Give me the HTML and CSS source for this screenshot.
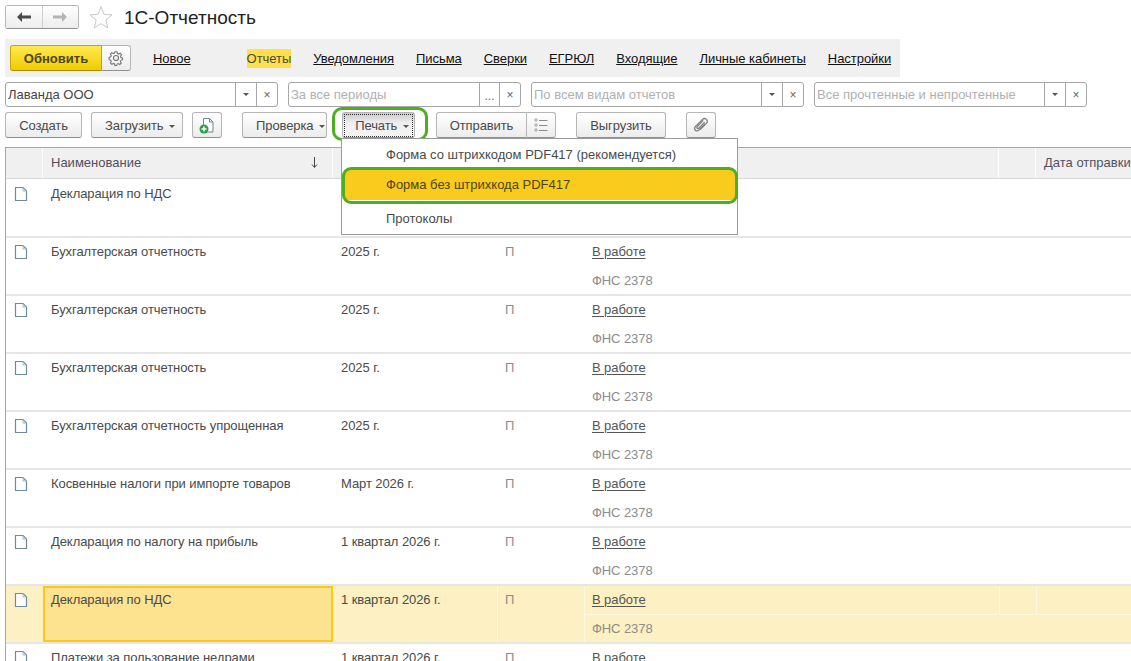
FILE: index.html
```html
<!DOCTYPE html>
<html lang="ru">
<head>
    <meta charset="UTF-8">
    <meta name="viewport" content="width=device-width, initial-scale=1.0">
    <title>1С-Отчетность</title>
    <link rel="stylesheet" href="styles.css">
</head>
<body>
    <svg class="sprites" width="0" height="0">
        <symbol id="doc" viewBox="0 0 14 16">
            <path d="M1.500 1.500h7.500l3.500 3.500v9.500h-11z" fill="#fff" stroke="#6f8a9b" stroke-width="1.200"/>
            <path d="M9 1.500v3.500h3.500" fill="none" stroke="#a9bac5"/>
        </symbol>
    </svg>

    <header class="title-bar">
        <div class="nav-group">
            <button class="nav-btn">
                <svg width="16" height="12" viewBox="0 0 16 12"><path d="M1 6l5-5v3.500h9v3H6V11z" fill="#4a4a4a"/></svg>
            </button>
            <button class="nav-btn">
                <svg width="16" height="12" viewBox="0 0 16 12"><path d="M15 6l-5-5v3.500H1v3h9V11z" fill="#b4b4b4"/></svg>
            </button>
        </div>
        <svg class="star" width="24" height="24" viewBox="0 0 24 24"><path d="M12 1.500l3 7.800 8 .6-6.200 5.100 2 8L12 18.600 5.200 23l2-8L1 9.900l8-.6z" fill="none" stroke="#c8c8c8"/></svg>
        <h1>1С-Отчетность</h1>
    </header>

    <nav class="top-panel">
        <div class="refresh-group">
            <button class="refresh-btn">Обновить</button>
            <button class="gear-btn">
                <svg width="16" height="16" viewBox="0 0 16 16" fill="none" stroke="#777" stroke-width="1.200"><path d="M6.800 1.500h2.400l.4 1.900 1.300.6 1.700-1 1.500 1.800-1.100 1.500.4 1.400 1.800.7v1.700l-1.800.7-.6 1.400.9 1.600-1.600 1.500-1.600-1-1.300.6-.4 1.500H6.800l-.4-1.700-1.300-.5-1.600 1-1.600-1.600 1-1.600-.6-1.300-1.800-.6V7.600l1.800-.6.6-1.400-1-1.600 1.600-1.600 1.600 1 1.300-.6z" transform="translate(.6 .4) scale(.92)"/><circle cx="8" cy="8" r="2.500"/></svg>
            </button>
        </div>
        <a class="tab tab-new" href="#">Новое</a>
        <span class="tab tab-active">Отчеты</span>
        <a class="tab" href="#">Уведомления</a>
        <a class="tab" href="#">Письма</a>
        <a class="tab" href="#">Сверки</a>
        <a class="tab" href="#">ЕГРЮЛ</a>
        <a class="tab" href="#">Входящие</a>
        <a class="tab" href="#">Личные кабинеты</a>
        <a class="tab" href="#">Настройки</a>
    </nav>

    <div class="filters">
        <div class="field field-wide">
            <span class="field-text filled">Лаванда ООО</span>
            <span class="field-btn"><i class="caret"></i></span>
            <span class="field-btn">×</span>
        </div>
        <div class="field">
            <span class="field-text">За все периоды</span>
            <span class="field-btn dots">...</span>
            <span class="field-btn">×</span>
        </div>
        <div class="field field-wide">
            <span class="field-text">По всем видам отчетов</span>
            <span class="field-btn"><i class="caret"></i></span>
            <span class="field-btn">×</span>
        </div>
        <div class="field field-wide">
            <span class="field-text">Все прочтенные и непрочтенные</span>
            <span class="field-btn"><i class="caret"></i></span>
            <span class="field-btn">×</span>
        </div>
    </div>

    <div class="toolbar">
        <button class="btn btn-create">Создать</button>
        <button class="btn btn-load">Загрузить <i class="caret"></i></button>
        <button class="btn btn-icon btn-add">
            <svg width="16" height="17" viewBox="0 0 16 17"><path d="M4.500 1.500h6l3.500 3.500v10h-9.500z" fill="#fff" stroke="#6d8796"/><path d="M10.500 1.500v3.500H14" fill="none" stroke="#6d8796"/><circle cx="5" cy="12" r="4.500" fill="#2f9e44"/><path d="M5 9.500v5M2.500 12h5" stroke="#fff" stroke-width="1.500"/></svg>
        </button>
        <button class="btn btn-check">Проверка <i class="caret"></i></button>
        <div class="print-wrap">
            <button class="btn btn-print"><span class="print-inner">Печать <i class="caret"></i></span></button>
        </div>
        <div class="send-group">
            <button class="btn btn-send">Отправить</button>
            <button class="btn btn-icon btn-list">
                <svg width="14" height="14" viewBox="0 0 14 14" fill="none" stroke="#8a8a8a"><circle cx="2" cy="2" r="1.200" stroke="#a0a0a0"/><circle cx="2" cy="7" r="1.200" stroke="#a0a0a0"/><circle cx="2" cy="12" r="1.200" stroke="#a0a0a0"/><path d="M5 2.500h8.500M5 7.500h8.500M5 12.500h8.500"/></svg>
            </button>
        </div>
        <button class="btn btn-unload">Выгрузить</button>
        <button class="btn btn-icon btn-clip">
            <svg width="16" height="16" viewBox="0 0 16 16" fill="none" stroke="#808080" stroke-width="1.300"><path d="M13.500 2.500c-1.300-1.300-3-1.100-4.200.1L3 8.900c-1.800 1.800-1.700 3.300-.7 4.300s2.500 1 4.200-.7l5.600-5.600"/><path d="M13.500 2.500c1 1.300.9 2.900-.1 3.900l-6.200 6.200M10.300 3.400l-5.600 5.600c-1 1-1 1.700-.5 2.200s1.200.4 2.100-.5l5.400-5.400"/></svg>
        </button>
    </div>

    <div class="print-menu">
        <div class="menu-item">Форма со штрихкодом PDF417 (рекомендуется)</div>
        <div class="menu-item menu-selected">Форма без штрихкода PDF417</div>
        <div class="menu-item menu-last">Протоколы</div>
    </div>

    <main class="table">
        <div class="table-head">
            <div class="head-cell"></div>
            <div class="head-cell head-name">Наименование
                <svg class="sort-arrow" width="7" height="11" viewBox="0 0 7 11"><path d="M3.500 0v10M1 7.500l2.500 3 2.500-3" fill="none" stroke="#444"/></svg>
            </div>
            <div class="head-cell"></div>
            <div class="head-cell"></div>
            <div class="head-cell head-date">Дата отправки</div>
        </div>

        <div class="row">
            <div class="cell-icon"><svg width="14" height="16"><use href="#doc"/></svg></div>
            <div class="cell-name">Декларация по НДС</div>
            <div class="cell-period"></div>
            <div class="cell-kind"></div>
            <div class="cell-status"></div>
        </div>

        <div class="row">
            <div class="cell-icon"><svg width="14" height="16"><use href="#doc"/></svg></div>
            <div class="cell-name">Бухгалтерская отчетность</div>
            <div class="cell-period">2025 г.</div>
            <div class="cell-kind">П</div>
            <div class="cell-status">
                <div class="status-top"><a href="#">В работе</a><span></span><span></span></div>
                <div class="status-bottom">ФНС 2378</div>
            </div>
        </div>

        <div class="row">
            <div class="cell-icon"><svg width="14" height="16"><use href="#doc"/></svg></div>
            <div class="cell-name">Бухгалтерская отчетность</div>
            <div class="cell-period">2025 г.</div>
            <div class="cell-kind">П</div>
            <div class="cell-status">
                <div class="status-top"><a href="#">В работе</a><span></span><span></span></div>
                <div class="status-bottom">ФНС 2378</div>
            </div>
        </div>

        <div class="row">
            <div class="cell-icon"><svg width="14" height="16"><use href="#doc"/></svg></div>
            <div class="cell-name">Бухгалтерская отчетность</div>
            <div class="cell-period">2025 г.</div>
            <div class="cell-kind">П</div>
            <div class="cell-status">
                <div class="status-top"><a href="#">В работе</a><span></span><span></span></div>
                <div class="status-bottom">ФНС 2378</div>
            </div>
        </div>

        <div class="row">
            <div class="cell-icon"><svg width="14" height="16"><use href="#doc"/></svg></div>
            <div class="cell-name">Бухгалтерская отчетность упрощенная</div>
            <div class="cell-period">2025 г.</div>
            <div class="cell-kind">П</div>
            <div class="cell-status">
                <div class="status-top"><a href="#">В работе</a><span></span><span></span></div>
                <div class="status-bottom">ФНС 2378</div>
            </div>
        </div>

        <div class="row">
            <div class="cell-icon"><svg width="14" height="16"><use href="#doc"/></svg></div>
            <div class="cell-name">Косвенные налоги при импорте товаров</div>
            <div class="cell-period">Март 2026 г.</div>
            <div class="cell-kind">П</div>
            <div class="cell-status">
                <div class="status-top"><a href="#">В работе</a><span></span><span></span></div>
                <div class="status-bottom">ФНС 2378</div>
            </div>
        </div>

        <div class="row">
            <div class="cell-icon"><svg width="14" height="16"><use href="#doc"/></svg></div>
            <div class="cell-name">Декларация по налогу на прибыль</div>
            <div class="cell-period">1 квартал 2026 г.</div>
            <div class="cell-kind">П</div>
            <div class="cell-status">
                <div class="status-top"><a href="#">В работе</a><span></span><span></span></div>
                <div class="status-bottom">ФНС 2378</div>
            </div>
        </div>

        <div class="row row-selected">
            <div class="cell-icon"><svg width="14" height="16"><use href="#doc"/></svg></div>
            <div class="cell-name">Декларация по НДС</div>
            <div class="cell-period">1 квартал 2026 г.</div>
            <div class="cell-kind">П</div>
            <div class="cell-status">
                <div class="status-top"><a href="#">В работе</a><span></span><span></span></div>
                <div class="status-bottom">ФНС 2378</div>
            </div>
        </div>

        <div class="row">
            <div class="cell-icon"><svg width="14" height="16"><use href="#doc"/></svg></div>
            <div class="cell-name">Платежи за пользование недрами</div>
            <div class="cell-period">1 квартал 2026 г.</div>
            <div class="cell-kind">П</div>
            <div class="cell-status">
                <div class="status-top"><a href="#">В работе</a><span></span><span></span></div>
            </div>
        </div>
    </main>
</body>
</html>
```

FILE: styles.css
```css
html {
    overflow: hidden;
    height: 100%;
}
body {
    font-family: 'Liberation Sans', Arial, sans-serif;
    font-size: 13px;
    color: #4a4a4a;
    margin: 0;
    height: 661px;
    overflow: hidden;
    position: relative;
    background-color: white;
}
button {
    font-family: inherit;
    padding: 0;
    cursor: pointer;
}
.sprites {
    position: absolute;
}

/* title */
.title-bar {
    display: flex;
    align-items: center;
    height: 24px;
    padding: 5px 0 0 5px;
}
.nav-group {
    display: flex;
    width: 74px;
    height: 24px;
    box-sizing: border-box;
    border: 1px solid #b5b5b5;
    border-bottom-color: #919191;
    border-radius: 3px;
    overflow: hidden;
}
.nav-btn {
    flex: 1;
    border: none;
    background: linear-gradient(#ffffff, #ececec);
    display: flex;
    align-items: center;
    justify-content: center;
}
.nav-btn + .nav-btn {
    border-left: 1px solid #cfcfcf;
}
.star {
    margin-left: 10px;
}
h1 {
    margin: 1px 0 0 11px;
    font-size: 19px;
    font-weight: normal;
    color: #222;
}

/* top panel */
.top-panel {
    display: flex;
    align-items: center;
    width: 895px;
    height: 38px;
    margin: 10px 0 0 5px;
    box-sizing: border-box;
    padding-left: 5px;
    background-color: #f0f0f0;
}
.refresh-group {
    display: flex;
    height: 26px;
}
.refresh-btn {
    width: 92px;
    border: 1px solid #c2a800;
    border-bottom-color: #a89000;
    border-radius: 3px 0 0 3px;
    background: linear-gradient(#ffe94d, #f2cb00);
    color: #4d4420;
    font-size: 13px;
    font-weight: bold;
}
.gear-btn {
    width: 29px;
    border: 1px solid #b5b5b5;
    border-left: none;
    border-bottom-color: #919191;
    border-radius: 0 3px 3px 0;
    background: linear-gradient(#ffffff, #ececec);
    display: flex;
    align-items: center;
    justify-content: center;
}
.tab {
    color: #111;
    margin-left: 22px;
    text-decoration: underline;
    letter-spacing: -0.05px;
}
.tab-active {
    margin-left: 56px;
    padding: 2px 0;
    background-color: #ffdf4d;
    color: #4a4a3a;
    text-decoration: none;
}

/* filters */
.filters {
    display: flex;
    gap: 10px;
    margin: 5px 0 0 5px;
}
.field {
    display: flex;
    width: 233px;
    height: 25px;
    box-sizing: border-box;
    border: 1px solid #a6a6a6;
    border-radius: 3px;
    align-items: stretch;
}
.field-wide {
    width: 273px;
}
.field-text {
    flex: 1;
    line-height: 23px;
    padding-left: 2px;
    color: #b0b0b0;
    white-space: nowrap;
}
.filled {
    color: #444;
}
.field-btn {
    width: 20px;
    border-left: 1px solid #a6a6a6;
    display: flex;
    align-items: center;
    justify-content: center;
    color: #666;
    font-size: 12px;
}
.dots {
    align-items: flex-end;
    padding-bottom: 5px;
    box-sizing: border-box;
    line-height: 10px;
}
.caret {
    display: inline-block;
    width: 0;
    height: 0;
    border: 3px solid transparent;
    border-top: 3px solid #555;
    border-bottom: none;
    vertical-align: middle;
    margin-left: 2px;
}
.field-btn .caret {
    margin-left: 0;
}

/* toolbar */
.toolbar {
    display: flex;
    height: 26px;
    margin: 5px 0 0 5px;
}
.btn {
    height: 26px;
    box-sizing: border-box;
    border: 1px solid #b5b5b5;
    border-bottom-color: #919191;
    border-radius: 3px;
    background: linear-gradient(#ffffff, #ececec);
    color: #4a4a4a;
    font-size: 13px;
    letter-spacing: -0.1px;
    white-space: nowrap;
}
.btn-icon {
    display: flex;
    align-items: center;
    justify-content: center;
}
.btn-create {
    width: 77px;
}
.btn-load {
    width: 92px;
    margin-left: 9px;
    padding-left: 6px;
}
.btn-add {
    width: 30px;
    margin-left: 9px;
}
.btn-check {
    width: 85px;
    margin-left: 20px;
    padding-left: 12px;
}
.print-wrap {
    position: relative;
    margin-left: 15px;
}
.print-wrap::after {
    content: "";
    position: absolute;
    left: -10px;
    right: -13px;
    top: -5px;
    bottom: -3px;
    border: 3px solid #4fae1f;
    border-radius: 10px;
    pointer-events: none;
}
.btn-print {
    width: 73px;
    padding: 1px;
    background: linear-gradient(#c9c9c9, #eeeeee 40%, #f4f4f4);
}
.print-inner {
    display: block;
    line-height: 21px;
    padding-left: 7px;
    border: 1px dotted #333;
}
.send-group {
    display: flex;
    margin-left: 21px;
}
.btn-send {
    width: 91px;
    border-radius: 3px 0 0 3px;
}
.btn-list {
    width: 29px;
    border-left: none;
    border-radius: 0 3px 3px 0;
}
.btn-unload {
    width: 90px;
    margin-left: 20px;
}
.btn-clip {
    width: 30px;
    margin-left: 20px;
}

/* print menu over the table */
.print-menu {
    position: absolute;
    left: 341px;
    top: 138px;
    z-index: 5;
    width: 397px;
    height: 97px;
    box-sizing: border-box;
    border: 1px solid #9a9a9a;
    background-color: white;
    padding-top: 1px;
}
.menu-item {
    height: 30px;
    line-height: 29px;
    padding-left: 44px;
}
.menu-selected {
    position: relative;
    margin: 0 2px 0 3px;
    padding-left: 41px;
    background-color: #f9cb1d;
    color: #4a4420;
}
.menu-selected::after {
    content: "";
    position: absolute;
    left: -3px;
    right: -3px;
    top: -3px;
    bottom: -4px;
    border: 3px solid #4fae1f;
    border-radius: 9px;
}
.menu-last {
    margin-top: 4px;
}

/* table */
.table {
    margin: 9px 0 0 5px;
    border-left: 1px solid #a6a6a6;
}
.table-head {
    display: grid;
    grid-template-columns: 37px 290px 666px 37px 1fr;
    height: 32px;
    margin-bottom: 1px;
    box-sizing: border-box;
    border-top: 1px solid #a6a6a6;
    border-bottom: 1px solid #d8d8d8;
    background-color: #f0f0f0;
}
.head-cell {
    border-right: 1px solid white;
    line-height: 30px;
    color: #505060;
    white-space: nowrap;
}
.head-name {
    position: relative;
    padding-left: 8px;
}
.sort-arrow {
    position: absolute;
    right: 14px;
    top: 9px;
}
.head-date {
    padding-left: 8px;
    border-right: none;
}
.row {
    display: grid;
    grid-template-columns: 37px 290px 164px 87px 1fr;
    height: 58px;
    box-sizing: border-box;
    border-bottom: 2px solid #e6e6e6;
    letter-spacing: -0.08px;
}
.cell-icon {
    padding: 6px 0 0 8px;
}
.cell-icon svg {
    display: block;
}
.cell-name {
    padding: 6px 0 0 8px;
    box-sizing: border-box;
}
.cell-period {
    padding: 6px 0 0 8px;
}
.cell-kind {
    padding: 6px 0 0 8px;
    color: #8c8c8c;
}
.cell-status a {
    color: #555;
}
.status-top {
    display: grid;
    grid-template-columns: 414px 37px 1fr;
    height: 29px;
    box-sizing: border-box;
}
.status-top a {
    padding: 6px 0 0 8px;
    text-underline-offset: 2px;
    justify-self: start;
}
.status-bottom {
    padding: 6px 0 0 8px;
    color: #8c8c8c;
}

/* selected row */
.row-selected {
    background-color: #fdf0c2;
}
.row-selected .cell-name {
    background-color: #fde28f;
    border: 2px solid #fbc81f;
    padding: 4px 0 0 6px;
}
.row-selected .cell-kind,
.row-selected .status-top a,
.row-selected .status-bottom {
    padding-left: 7px;
}
.row-selected .cell-kind,
.row-selected .cell-status {
    border-left: 1px solid #fff8e0;
}
.row-selected .status-top {
    border-bottom: 1px solid #fff8e0;
}
.row-selected .status-top span {
    border-left: 1px solid #fff8e0;
}
```
